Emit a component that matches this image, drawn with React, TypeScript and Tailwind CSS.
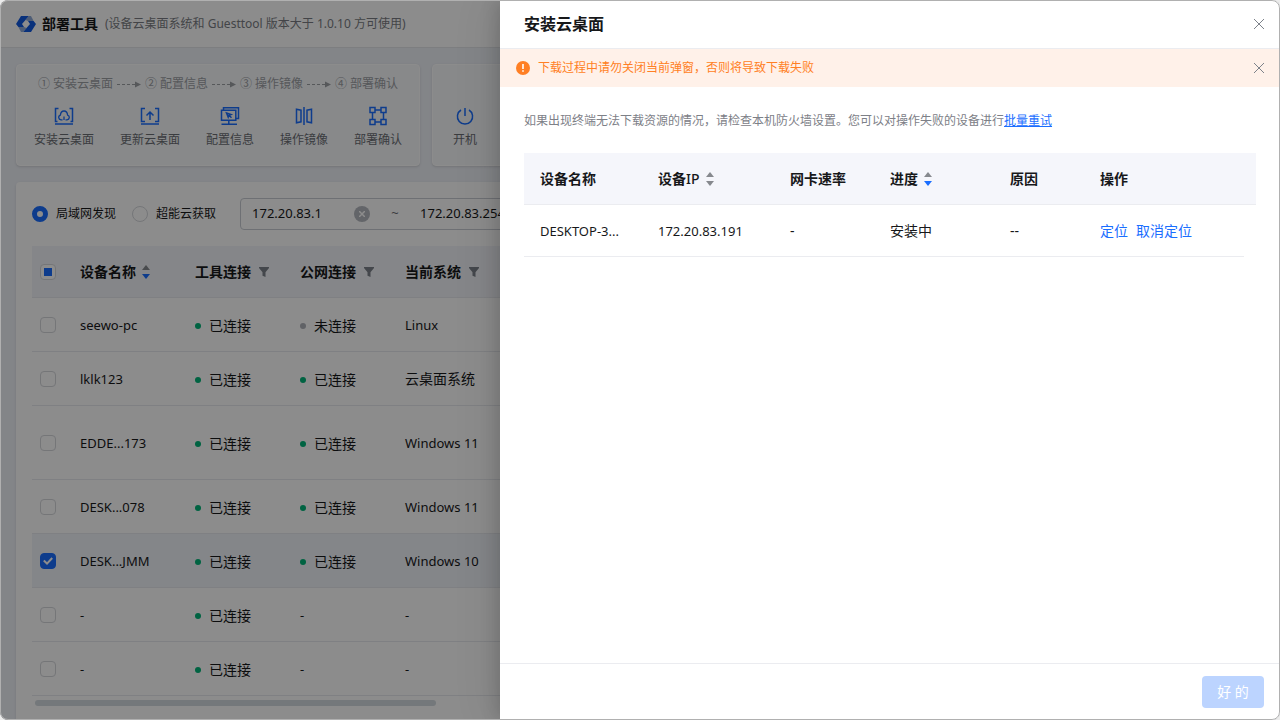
import { Fragment } from "react";
import type { ReactNode } from "react";

const steps = ["安装云桌面", "配置信息", "操作镜像", "部署确认"];
const stepNumbers = ["①", "②", "③", "④"];

const devices = [
  { id: 1, name: "seewo-pc", tool: true, net: false, system: "Linux" },
  { id: 2, name: "lklk123", tool: true, net: true, system: "云桌面系统" },
  { id: 3, name: "EDDE...173", tool: true, net: true, system: "Windows 11", tall: true },
  { id: 4, name: "DESK...078", tool: true, net: true, system: "Windows 11" },
  { id: 5, name: "DESK...JMM", tool: true, net: true, system: "Windows 10", checked: true },
  { id: 6, name: "-", tool: true, net: null, system: "-" },
  { id: 7, name: "-", tool: true, net: null, system: "-" },
];

function Logo() {
  return (
    <svg className="w-5 h-4" viewBox="0 0 20 16" aria-hidden="true">
      <path d="M5 0h8L9.500 4 6 8l2 3H2.400L0 8z" fill="#1259e0" />
      <path d="M13 0h2l2.600 5H12L9.500 4z" fill="#8fa9d8" />
      <path d="M15 16H7l3.500-4L14 8l-2-3h5.600L20 8z" fill="#1259e0" />
      <path d="M7 16H5l-2.600-5H8l2.500 1z" fill="#8fa9d8" />
    </svg>
  );
}

function Arrow() {
  return (
    <svg className="w-6 h-2" viewBox="0 0 24 8" aria-hidden="true">
      <path d="M0 4.5h18" stroke="#9da0a5" strokeDasharray="3 2" />
      <path d="M18 1.5l6 3-6 3z" fill="#9da0a5" />
    </svg>
  );
}

function ActionIcon({ children }: { children: ReactNode }) {
  return (
    <svg
      className="w-5 h-5"
      viewBox="0 0 20 20"
      fill="none"
      stroke="#1a6eff"
      strokeWidth="1.5"
      aria-hidden="true"
    >
      {children}
    </svg>
  );
}

const actions = [
  {
    label: "安装云桌面",
    icon: (
      <>
        <path d="M4.500 2.500h-3v13h2M15.500 2.500h3v13h-2M1 18h18" />
        <path
          d="M8.500 13.800H7a2.400 2.400 0 0 1-.6-4.700C6.600 6.500 8 5 10 5s3.400 1.500 3.600 4.100a2.400 2.400 0 0 1-.6 4.700h-1.500M10 10.500v3.500"
          strokeWidth="1.3"
        />
      </>
    ),
  },
  {
    label: "更新云桌面",
    icon: (
      <path d="M5 2.5H1.5v13H5M15 2.5h3.5v13H15M1 18h18M10 14V6M6.500 9.500L10 6l3.500 3.500" />
    ),
  },
  {
    label: "配置信息",
    icon: (
      <>
        <path d="M3.500 4V1.700h15v10.800H16M1.500 4.300h14.300v10H1.500zM8.800 14.500V18M1.500 18.300h15.500" />
        <path d="M6.500 7l4.500 1.500-2 .8-.8 2zM9 9.300l2.500 2.500" />
      </>
    ),
  },
  {
    label: "操作镜像",
    icon: <path d="M10 1v18M2.500 3.200l4.500 1v11.600l-4.500 1zM17.500 3.200l-4.500 1v11.600l4.500 1z" />,
  },
  {
    label: "部署确认",
    icon: (
      <path d="M2 1.500h5v5H2zM13 1.500h5v5h-5zM2 13.500h5v5H2zM13 13.500h5v5h-5zM7 4h6M7 16h6M4.500 6.500v7M15.500 6.500v7" />
    ),
  },
];

function Action({ label, icon }: { label: string; icon: ReactNode }) {
  return (
    <button className="flex flex-col items-center gap-1 text-xs leading-5 text-[#6b6e74] whitespace-nowrap">
      <ActionIcon>{icon}</ActionIcon>
      {label}
    </button>
  );
}

function Sorter({ active = false }: { active?: boolean }) {
  return (
    <svg className="w-2 h-[14px]" viewBox="0 0 8 14" aria-hidden="true">
      <path d="M4 0l4 5H0z" fill="#86898e" />
      <path d="M4 14l4-5H0z" fill={active ? "#1a6eff" : "#86898e"} />
    </svg>
  );
}

function Filter() {
  return (
    <svg className="w-[10px] h-[10px]" viewBox="0 0 10 10" aria-hidden="true">
      <path d="M0 0h10v1L6.5 5.2V10l-3-1.3V5.2L0 1z" fill="#7d828a" />
    </svg>
  );
}

function Cross() {
  return (
    <svg className="w-[10px] h-[10px]" viewBox="0 0 10 10" stroke="#7d828a" aria-hidden="true">
      <path d="M0 0l10 10M10 0L0 10" />
    </svg>
  );
}

function Checkbox({ label, checked = false, partial = false }: {
  label: string;
  checked?: boolean;
  partial?: boolean;
}) {
  return (
    <label className="grid w-4 h-4 place-items-center">
      <input
        type="checkbox"
        aria-label={label}
        defaultChecked={checked}
        className="peer col-start-1 row-start-1 w-4 h-4 appearance-none rounded border border-[#d5d7db] bg-white checked:border-[#1a6eff] checked:bg-[#1a6eff]"
      />
      {partial && <span className="col-start-1 row-start-1 w-2 h-2 bg-[#1a6eff]" />}
      <svg
        className="col-start-1 row-start-1 w-[10px] h-2 hidden peer-checked:block"
        viewBox="0 0 10 8"
        fill="none"
        stroke="#fff"
        strokeWidth="2"
        aria-hidden="true"
      >
        <path d="M0.8 3.6l3.2 3 5.2-5.6" />
      </svg>
    </label>
  );
}

function Status({ online }: { online: boolean | null }) {
  if (online === null) return <span className="text-[13px]">-</span>;
  return (
    <span className="flex items-center gap-2 pt-0.5">
      <span className={online ? "w-1.5 h-1.5 rounded-full bg-[#00b578]" : "w-1.5 h-1.5 rounded-full bg-[#b0b3ba]"} />
      {online ? "已连接" : "未连接"}
    </span>
  );
}

function Radio({ id, label, checked = false }: { id: string; label: string; checked?: boolean }) {
  return (
    <label htmlFor={id} className="flex items-center gap-2 text-xs whitespace-nowrap">
      <input
        id={id}
        type="radio"
        name="source"
        defaultChecked={checked}
        className="w-4 h-4 appearance-none rounded-full border border-[#d5d7db] bg-white checked:border-[5px] checked:border-[#1a6eff]"
      />
      {label}
    </label>
  );
}

function DeployPage() {
  return (
    <div className="flex h-full flex-col bg-[#eff2f8]">
      <header className="flex h-12 shrink-0 items-center border-b border-[#e4e6ea] bg-white pl-4">
        <Logo />
        <h1 className="ml-1.5 text-sm font-bold">部署工具</h1>
        <span className="ml-[7px] text-xs text-[#7a7d83]">
          (设备云桌面系统和 Guesttool 版本大于 1.0.10 方可使用)
        </span>
      </header>

      <div className="flex shrink-0 gap-3 px-4 pt-4">
        <section className="flex h-[102px] flex-col gap-3 rounded border border-white bg-[#f8fafc] px-[17px] pt-[9px] shadow-sm">
          <div className="flex items-center gap-1 pl-1 text-xs leading-5 text-[#9da0a5] whitespace-nowrap">
            {steps.map((step, i) => (
              <Fragment key={step}>
                {i > 0 && <Arrow />}
                <span className="flex gap-[3px]">
                  <span>{stepNumbers[i]}</span>
                  {step}
                </span>
              </Fragment>
            ))}
          </div>
          <div className="flex gap-[26px]">
            {actions.map((action) => (
              <Action key={action.label} label={action.label} icon={action.icon} />
            ))}
          </div>
        </section>
        <section className="flex h-[102px] flex-1 rounded border border-white bg-[#f8fafc] px-5 pt-[41px] shadow-sm">
          <Action
            label="开机"
            icon={<path d="M10 2v8M6 4a7.6 7.6 0 1 0 8 0" />}
          />
        </section>
      </div>

      <section className="mx-4 mt-4 flex-1 rounded-t bg-white px-4 pt-4 shadow-sm">
        <div className="flex items-center gap-6">
          <div className="flex gap-4">
            <Radio id="lan" label="局域网发现" checked />
            <Radio id="cloud" label="超能云获取" />
          </div>
          <div className="flex h-8 w-80 items-center rounded border border-[#c9cdd4] px-[11px] text-[13px]">
            <input aria-label="起始IP" defaultValue="172.20.83.1" className="w-[102px] outline-none" />
            <button aria-label="清除" className="grid h-4 w-4 place-items-center rounded-full bg-[#b4b8bf]">
              <svg className="w-1.5 h-1.5" viewBox="0 0 6 6" stroke="#fff" strokeWidth="1.5" aria-hidden="true">
                <path d="M0 0l6 6M6 0L0 6" />
              </svg>
            </button>
            <span className="w-[50px] text-center text-[#6b6e73]">~</span>
            <input aria-label="结束IP" defaultValue="172.20.83.254" className="w-[100px] outline-none" />
          </div>
        </div>

        <table className="mt-4 w-full table-fixed border-separate border-spacing-0 text-left text-sm leading-[22px] [&_td]:border-b [&_td]:border-[#e8eaee] [&_th]:border-b [&_th]:border-[#e8eaee]">
          <colgroup>
            <col className="w-12" />
            <col className="w-[115px]" />
            <col className="w-[105px]" />
            <col className="w-[105px]" />
            <col />
          </colgroup>
          <thead>
            <tr className="h-[52px] bg-[#f3f5f9]">
              <th className="pl-2">
                <Checkbox label="全选" partial />
              </th>
              <th>
                <span className="flex items-center gap-1.5">
                  设备名称 <Sorter active />
                </span>
              </th>
              {["工具连接", "公网连接", "当前系统"].map((title) => (
                <th key={title}>
                  <span className="flex items-center gap-2">
                    {title} <Filter />
                  </span>
                </th>
              ))}
            </tr>
          </thead>
          <tbody>
            {devices.map((device) => (
              <tr
                key={device.id}
                className={`${device.tall ? "h-[74px]" : "h-[54px]"} ${device.checked ? "bg-[#f0f4fa]" : ""}`}
              >
                <td className="pl-2">
                  <Checkbox label={`选择 ${device.name}`} checked={device.checked} />
                </td>
                <td className="text-[13px]">{device.name}</td>
                <td>
                  <Status online={device.tool} />
                </td>
                <td>
                  <Status online={device.net} />
                </td>
                <td className={device.id === 2 ? "" : "text-[13px]"}>{device.system}</td>
              </tr>
            ))}
          </tbody>
        </table>
        <div className="ml-[3px] mt-1 h-1.5 w-[401px] rounded-full bg-[#d3dae0]" />
      </section>
    </div>
  );
}

function InstallDrawer() {
  return (
    <aside
      role="dialog"
      aria-labelledby="drawer-title"
      className="absolute inset-y-0 right-0 flex w-[780px] max-w-full flex-col bg-white shadow-[-4px_0_16px_rgba(0,0,0,0.14),-8px_0_40px_rgba(0,0,0,0.08)]"
    >
      <header className="flex h-[49px] items-center justify-between border-b border-[#ebecf0] pl-6 pr-4">
        <h2 id="drawer-title" className="text-base font-bold">
          安装云桌面
        </h2>
        <button aria-label="关闭" className="grid place-items-center">
          <Cross />
        </button>
      </header>

      <div role="alert" className="flex h-[38px] items-center bg-[#fff1e9] px-4">
        <svg className="w-[14px] h-[14px]" viewBox="0 0 14 14" aria-hidden="true">
          <circle cx="7" cy="7" r="7" fill="#ff7f24" />
          <path d="M7 3v5M7 9.2v1.6" stroke="#fff" strokeWidth="1.6" />
        </svg>
        <p className="ml-2 flex-1 text-xs text-[#ff7f24]">
          下载过程中请勿关闭当前弹窗，否则将导致下载失败
        </p>
        <button aria-label="关闭提示" className="grid place-items-center">
          <Cross />
        </button>
      </div>

      <div className="flex-1 px-6 pt-6">
        <p className="text-xs leading-5 text-[#7d8087]">
          如果出现终端无法下载资源的情况，请检查本机防火墙设置。您可以对操作失败的设备进行
          <a href="#retry" className="text-[#1a6eff] underline">
            批量重试
          </a>
        </p>

        <table className="mt-[22px] w-full table-fixed border-separate border-spacing-0 text-left text-sm leading-[22px]">
          <colgroup>
            <col className="w-[118px]" />
            <col className="w-[132px]" />
            <col className="w-[100px]" />
            <col className="w-[120px]" />
            <col className="w-[90px]" />
            <col />
            <col className="w-3" />
          </colgroup>
          <thead>
            <tr className="h-[52px] bg-[#f5f6fb] [&>th]:border-b [&>th]:border-[#ebecf0]">
              <th className="pl-4">设备名称</th>
              <th className="pl-4">
                <span className="flex items-center gap-1.5">
                  <span>
                    设备<span className="font-medium">IP</span>
                  </span>
                  <Sorter />
                </span>
              </th>
              <th className="pl-4">网卡速率</th>
              <th className="pl-4">
                <span className="flex items-center gap-1.5">
                  进度 <Sorter active />
                </span>
              </th>
              <th className="pl-4">原因</th>
              <th className="pl-4">操作</th>
              <th />
            </tr>
          </thead>
          <tbody>
            <tr className="h-[52px]">
              <td className="border-b border-[#ebecf0] pl-4 text-[13px]">DESKTOP-3...</td>
              <td className="border-b border-[#ebecf0] pl-4 text-[13px]">172.20.83.191</td>
              <td className="border-b border-[#ebecf0] pl-4">-</td>
              <td className="border-b border-[#ebecf0] pl-4">安装中</td>
              <td className="border-b border-[#ebecf0] pl-4">--</td>
              <td className="border-b border-[#ebecf0] pl-4">
                <span className="flex gap-2 text-[#1a6eff]">
                  <a href="#locate">定位</a>
                  <a href="#cancel">取消定位</a>
                </span>
              </td>
              <td />
            </tr>
          </tbody>
        </table>
      </div>

      <footer className="flex h-[57px] items-center justify-end border-t border-[#ebecf0] px-4">
        <button disabled className="h-8 w-[62px] rounded bg-[#bcd4ff] text-sm text-white">
          好 的
        </button>
      </footer>
    </aside>
  );
}

export default function App() {
  return (
    <div className="h-screen bg-[#ececec] font-['Noto_Sans','Noto_Sans_CJK_SC',sans-serif] text-[#17181a]">
      <main className="relative h-full overflow-hidden rounded-lg">
        <DeployPage />
        <div className="absolute inset-0 bg-black/45" />
        <InstallDrawer />
        <div className="pointer-events-none absolute inset-0 rounded-lg border border-[#b0b0b0]" />
      </main>
    </div>
  );
}
